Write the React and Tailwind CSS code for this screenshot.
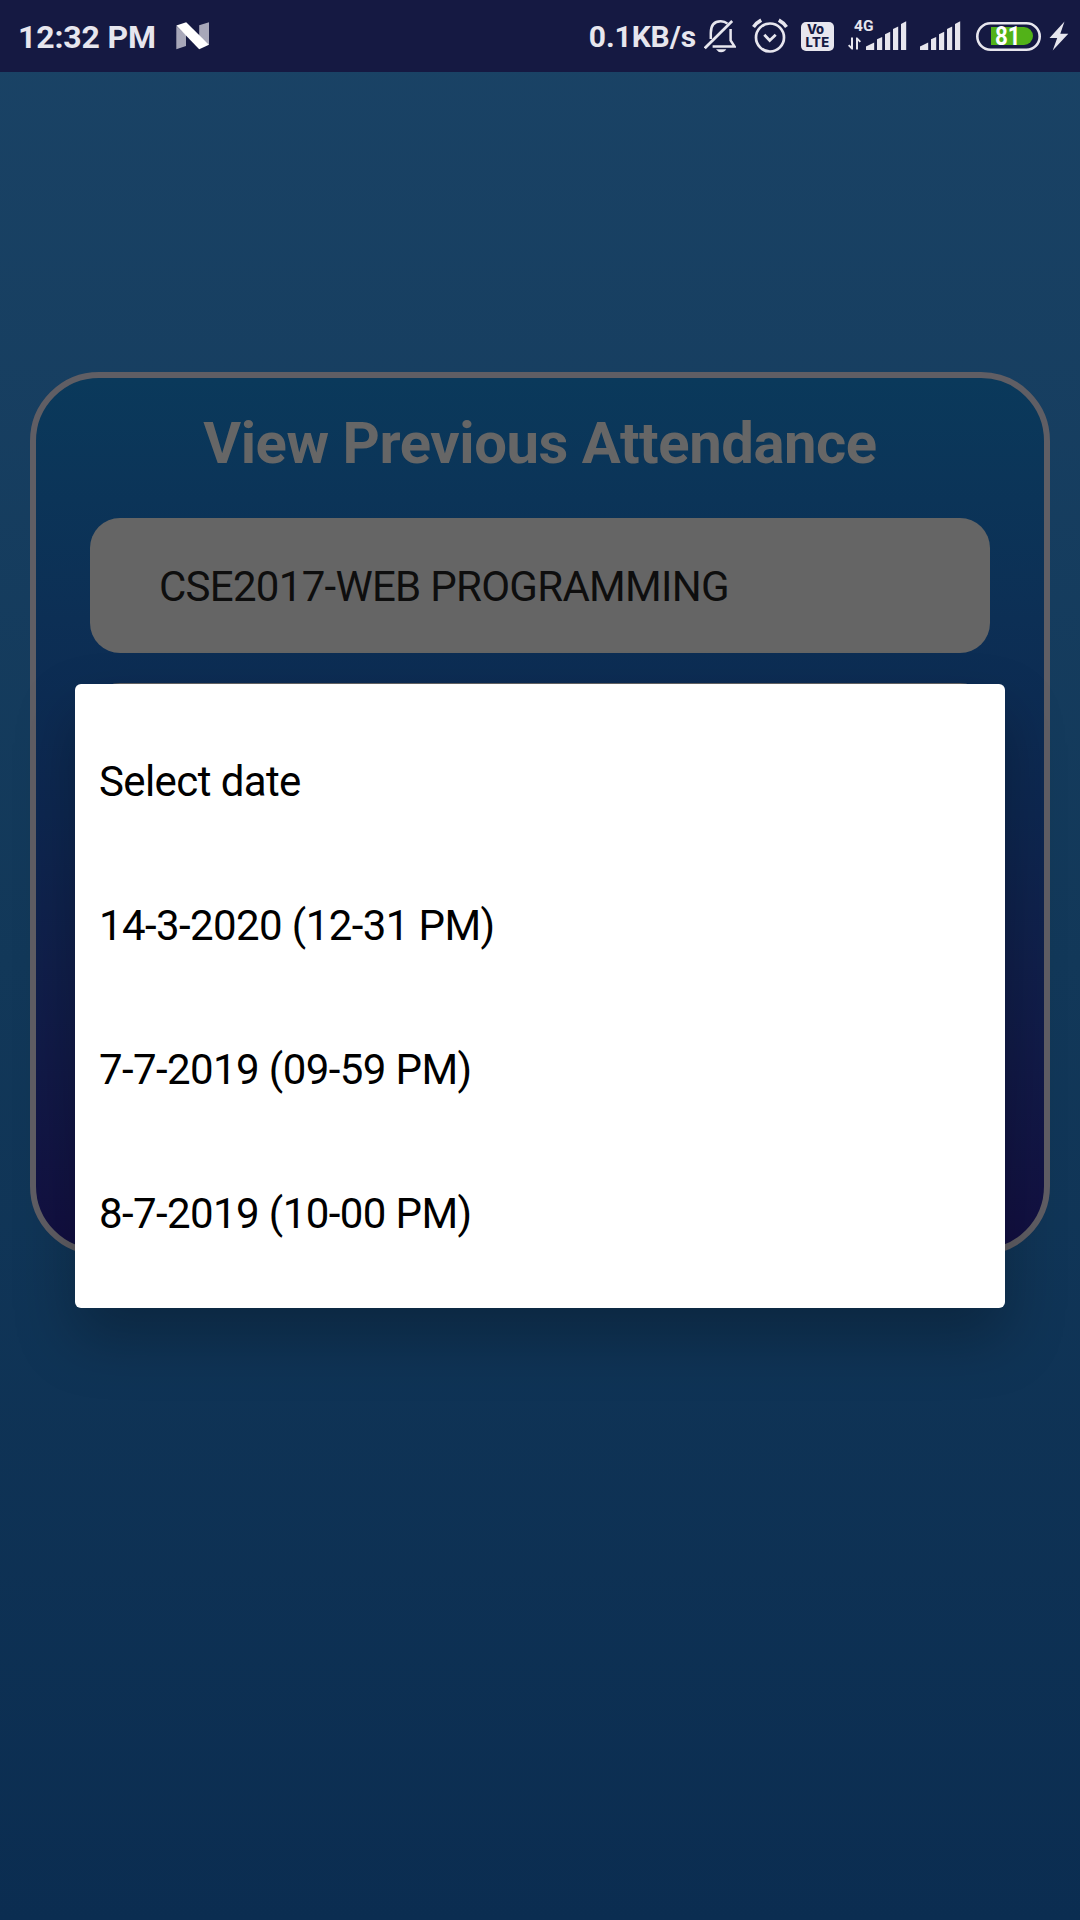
const dates = ["Select date", "14-3-2020 (12-31 PM)", "7-7-2019 (09-59 PM)", "8-7-2019 (10-00 PM)"];

function NougatIcon() {
  return (
    <svg className="ml-[20px] h-7 w-[34px]" viewBox="0 0 34 28">
      <path d="M0.3 4L10 13V24L0.3 27.3Z" fill="#a7a7b9" />
      <path d="M23.2 3.3L33 0.2V23L23.2 14Z" fill="#a7a7b9" />
      <path d="M0.3 3.6L10.2 0.2L33 22.7L23.2 27.2Z" fill="#fff" />
    </svg>
  );
}

function BellOffIcon() {
  return (
    <svg className="ml-[8px] h-9 w-8" viewBox="0 0 32 36" fill="none" stroke="#e7e6ee" strokeWidth="2.5">
      <path d="M0.8 30.2L28.2 3" strokeWidth="2.7" />
      <path d="M6.8 21V15C6.8 7 10.5 3.2 16.7 3.2C19.5 3.2 21.8 4.1 23.4 5.6" />
      <path d="M26.6 11V22.5L30.6 28.6H8.6" />
      <path d="M12 31.2H22.3Q20.5 34.2 17.2 34.2Q14 34.2 12 31.2Z" fill="#e7e6ee" stroke="none" />
    </svg>
  );
}

function AlarmIcon() {
  return (
    <svg className="ml-[16px] h-9 w-9" viewBox="0 0 36 36" fill="none" stroke="#e7e6ee" strokeWidth="2.7">
      <circle cx="18" cy="19.5" r="14" />
      <path d="M12.3 16.8L17.7 22.5L23.7 16.8" strokeWidth="2.8" />
      <path d="M1.5 9Q4.5 4.8 9.2 2.2M34.5 9Q31.5 4.8 26.8 2.2" strokeWidth="3.6" />
    </svg>
  );
}

function VolteBadge() {
  return (
    <div className="ml-[13px] flex h-[29px] w-[33px] flex-col items-center rounded-[5px] bg-[#e7e6ee] pt-px font-[Inter] text-[13px] leading-[13px] font-extrabold text-[#151942]">
      <span className="-translate-x-[2px]">Vo</span>
      <span className="tracking-[0.3px]">LTE</span>
    </div>
  );
}

function Bars() {
  return (
    <svg className="h-[30px] w-[41px]" viewBox="0 0 41 30" fill="#e7e6ee">
      <path d="M0 29V25.5L8.2 21.5V29Z" />
      <path d="M11 29V18.3L16.2 16V29Z" />
      <path d="M19 29V13.3L24.2 10.7V29Z" />
      <path d="M27 29V8L32.2 5.4V29Z" />
      <path d="M35 29V3L40.2 0.2V29Z" />
    </svg>
  );
}

function DataSignal() {
  return (
    <div className="relative ml-[14px] flex items-end">
      <svg className="mb-px h-[13px] w-[13px]" viewBox="0 0 13 13" fill="#e7e6ee">
        <path d="M3 0.5H5V12.5H3.6L0 8.8L1.3 7.6L3 9.2Z" />
        <path d="M10 12.5H8V0.5H9.4L13 4.2L11.7 5.4L10 3.8Z" />
      </svg>
      <span className="absolute -top-[3px] left-[6px] text-[15.5px] leading-[16px] font-bold">4G</span>
      <div className="ml-[5px] h-[30px]">
        <Bars />
      </div>
    </div>
  );
}

function Battery() {
  return (
    <div className="relative ml-[15px] flex h-[29px] w-[65px] items-center pl-[15px]">
      <svg className="absolute inset-0" width="65" height="29" viewBox="0 0 65 29" fill="none">
        <rect x="1.3" y="1.3" width="62.4" height="26.4" rx="13.2" stroke="#e7e6ee" strokeWidth="2.6" />
      </svg>
      <div className="relative flex h-[18px] w-[42px] items-center rounded-r-full rounded-l-[2px] bg-[#52b218] pl-[4px] text-[26px] leading-none font-bold text-white">
        <span className="origin-left scale-x-[0.86]">81</span>
      </div>
    </div>
  );
}

function StatusBar() {
  return (
    <header className="flex h-[72px] items-center bg-[#151942] pr-[11px] pl-[18px] text-[32px] font-bold text-[#e7e6ee]">
      <span className="pt-[2px] tracking-[-0.16px]">12:32 PM</span>
      <NougatIcon />
      <span className="ml-auto pt-px text-[30px] tracking-[-0.1px]">0.1KB/s</span>
      <BellOffIcon />
      <AlarmIcon />
      <VolteBadge />
      <DataSignal />
      <div className="ml-[13px] h-[30px]">
        <Bars />
      </div>
      <Battery />
      <svg className="ml-[8px] h-[30px] w-5" viewBox="0 0 20 30" fill="#e7e6ee">
        <path d="M15.5 0.5L0.5 17H8.2L3.7 29.5L19.3 12.8H11.3Z" />
      </svg>
    </header>
  );
}

export default function App() {
  return (
    <div className="relative h-[1920px] w-[1080px] overflow-hidden bg-linear-to-b from-[#1a4366] via-[#123859] to-[#0b2d51] font-[Roboto,sans-serif]">
      <StatusBar />
      <main className="mx-[30px] mt-[300px] h-[883px] rounded-[69px] border-[6px] border-[#605e64] bg-linear-to-b from-[#0a395b] via-[#0d2750] to-[#120f41] px-[54px]">
        <h1 className="pt-[30px] text-center text-[58px] leading-[70px] font-bold tracking-[-0.44px] text-[#666]">
          View Previous Attendance
        </h1>
        <div className="mt-10 flex h-[135px] items-center rounded-[30px] bg-[#656565] pt-[2px] pl-[69px] text-[42px] tracking-[-0.72px] text-[#0e0e0e]">
          CSE2017-WEB PROGRAMMING
        </div>
        <div className="mt-[30px] h-[135px] rounded-[30px] bg-[#656565]" />
      </main>
      <ul className="absolute top-[684px] left-[75px] w-[930px] rounded-[6px] bg-white py-6 shadow-[0_30px_60px_rgba(0,0,0,0.25)]">
        {dates.map((date) => (
          <li key={date} className="flex h-36 items-center px-6 pt-[2px] text-[42px] tracking-[-0.6px] text-black">
            {date}
          </li>
        ))}
      </ul>
    </div>
  );
}
